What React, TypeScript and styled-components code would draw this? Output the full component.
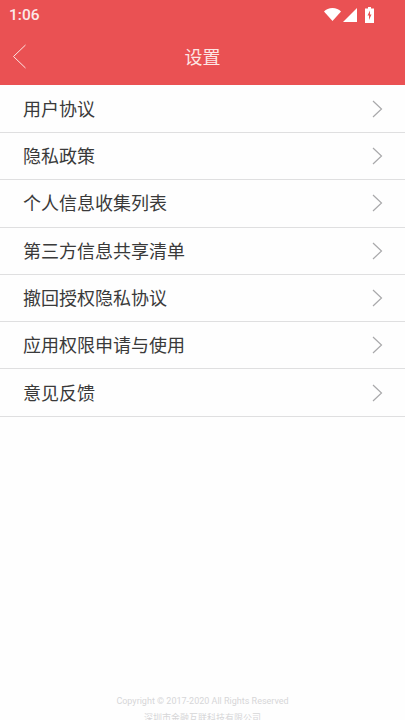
import React from "react";
import styled, { createGlobalStyle } from "styled-components";

const Global = createGlobalStyle`
  html, body { margin: 0; padding: 0; height: 720px; overflow: hidden; background: #fff; }
  body { font-family: Roboto, "Noto Sans CJK SC", sans-serif; }
  #root { height: 720px; }
`;
const Page = styled.div`
  height: 720px; display: flex; flex-direction: column; background: #fefefe; overflow: hidden;
`;
const Header = styled.header`
  height: 85px; flex: none; background: #ea5153; color: #fff; display: flex; flex-direction: column;
`;
const StatusBar = styled.div`
  height: 29px; display: flex; align-items: center; justify-content: space-between; padding: 0 31px 0 9px;
`;
const Time = styled.span`
  font-size: 15.5px; font-weight: 500; color: #fbe9e9;
`;
const StatusIcons = styled.div`
  display: flex; align-items: center; gap: 2px;
`;
const NavBar = styled.div`
  flex: 1; display: flex; align-items: center; justify-content: center; position: relative; padding-bottom: 3px;
`;
const Back = styled.svg`
  position: absolute; left: 12px; top: 15px; width: 15px; height: 25px;
`;
const Title = styled.h1`
  margin: 0; font-size: 18px; font-weight: 400; color: #fde6e4; font-family: "Noto Sans CJK SC", sans-serif;
`;
const List = styled.ul`
  list-style: none; margin: 0; padding: 0.7px 0 0; flex: 1;
`;
const Row = styled.li`
  height: 47.3px; box-sizing: border-box; display: flex; align-items: center; justify-content: space-between;
  padding: 0 22px 0 23px; border-bottom: 1px solid #dfdfe0;
`;
const Label = styled.span`
  font-size: 18px; color: #3a3a3a; font-family: "Noto Sans CJK SC", sans-serif; margin-bottom: 2px;
`;
const Chevron = styled.svg`
  width: 11px; height: 18px; flex: none;
`;
const Footer = styled.footer`
  height: 27px; flex: none; text-align: center; color: #d6d6d8; font-size: 9px; line-height: 17px;
`;
const FooterLine = styled.div`
  white-space: nowrap;
`;
const BatteryIcon = styled.svg`
  margin-left: 6px;
`;

const items = ["用户协议", "隐私政策", "个人信息收集列表", "第三方信息共享清单", "撤回授权隐私协议", "应用权限申请与使用", "意见反馈"];

export default function App() {
  return (
    <Page>
      <Global />
      <Header>
        <StatusBar>
          <Time>1:06</Time>
          <StatusIcons>
            <svg width="17" height="13" viewBox="0 0 17 13"><path d="M0 3.500C2 1.500 5 0 8.500 0S15 1.500 17 3.500L8.500 13z" fill="#fff" /></svg>
            <svg width="14" height="14" viewBox="0 0 14 14"><path d="M14 0v14H0z" fill="#fff" /></svg>
            <BatteryIcon width="9" height="16" viewBox="0 0 9 16"><path d="M3 0h3v1.500h3V16H0V1.500h3z" fill="#fff" /><path d="M5 3.500L2.500 8.500h1.500V13l2.500-5.500H5z" fill="#ea5153" /></BatteryIcon>
          </StatusIcons>
        </StatusBar>
        <NavBar>
          <Back viewBox="0 0 15 25"><path d="M13.500 1L1.500 12.500 13.500 24" fill="none" stroke="#fde6e4" strokeWidth="1" /></Back>
          <Title>设置</Title>
        </NavBar>
      </Header>
      <List>
        {items.map((t) => (
          <Row key={t}>
            <Label>{t}</Label>
            <Chevron viewBox="0 0 11 18"><path d="M1 1l8.500 8L1 17" fill="none" stroke="#a9a9ab" strokeWidth="1.200" /></Chevron>
          </Row>
        ))}
      </List>
      <Footer>
        <FooterLine>Copyright © 2017-2020 All Rights Reserved</FooterLine>
        <FooterLine>深圳市金融互联科技有限公司</FooterLine>
      </Footer>
    </Page>
  );
}
